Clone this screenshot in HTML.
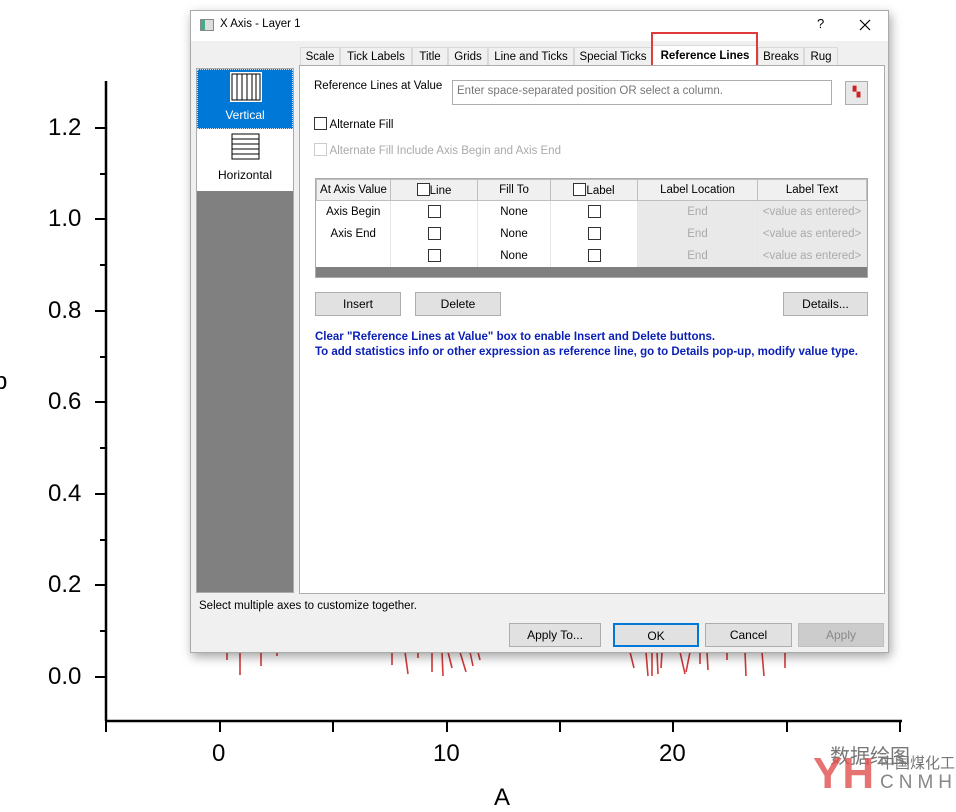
<!DOCTYPE html>
<html><head><meta charset="utf-8"><style>
*{box-sizing:border-box;margin:0;padding:0}
body{width:956px;height:798px;overflow:hidden;background:#fff;position:relative;font-family:"Liberation Sans","DejaVu Sans",sans-serif;font-size:12px;color:#000}
.a{position:absolute}
.ax{font-family:"Liberation Sans",Arial,sans-serif;font-size:24px;color:#000}
.dlg{left:190px;top:10px;width:699px;height:643px;background:#f0f0f0;border:1px solid #aaa;box-shadow:2px 4px 10px rgba(0,0,0,.35)}
.tab{position:absolute;top:36px;height:20px;border:1px solid #d9d9d9;border-bottom:none;background:#f0f0f0;font-size:11.5px;text-align:center;line-height:18px;white-space:nowrap;overflow:hidden}
.btn{position:absolute;height:24px;border:1px solid #adadad;background:#e1e1e1;text-align:center;line-height:22px;font-size:12px}
.cb{display:inline-block;width:13px;height:13px;border:1px solid #333;background:#fff;vertical-align:-2px}
table{border-collapse:collapse;font-size:12px}
td{border-right:1px solid #e6e6e6;text-align:center;height:22px;padding:0;white-space:nowrap}
.hd td{background:#f0f0f0;border:1px solid #bfbfbf;height:21px}
.g{background:#e9e9e9;color:#aaa}
</style></head><body>
<svg class="a" style="left:0;top:0" width="956" height="798">
<g stroke="#000" stroke-width="2.5" fill="none">
<line x1="106" y1="81" x2="106" y2="721"/>
<line x1="105" y1="721" x2="902" y2="721"/>
</g>
<g stroke="#000" stroke-width="2">
<line x1="95" y1="128" x2="106" y2="128"/><line x1="95" y1="219" x2="106" y2="219"/><line x1="95" y1="311" x2="106" y2="311"/><line x1="95" y1="402" x2="106" y2="402"/><line x1="95" y1="494" x2="106" y2="494"/><line x1="95" y1="585" x2="106" y2="585"/><line x1="95" y1="677" x2="106" y2="677"/>
<line x1="100" y1="174" x2="106" y2="174"/><line x1="100" y1="265" x2="106" y2="265"/><line x1="100" y1="357" x2="106" y2="357"/><line x1="100" y1="448" x2="106" y2="448"/><line x1="100" y1="540" x2="106" y2="540"/><line x1="100" y1="631" x2="106" y2="631"/>
<line x1="106" y1="721" x2="106" y2="732"/><line x1="220" y1="721" x2="220" y2="732"/><line x1="333" y1="721" x2="333" y2="732"/><line x1="447" y1="721" x2="447" y2="732"/><line x1="560" y1="721" x2="560" y2="732"/><line x1="673" y1="721" x2="673" y2="732"/><line x1="787" y1="721" x2="787" y2="732"/><line x1="900" y1="721" x2="900" y2="732"/>
</g>
<g stroke="#d03a3a" stroke-width="1.6">
<line x1="227" y1="652" x2="227" y2="660"/><line x1="240" y1="652" x2="240" y2="675"/><line x1="261" y1="652" x2="261" y2="666"/><line x1="277" y1="652" x2="277" y2="656"/>
<line x1="392" y1="652" x2="392" y2="665"/><line x1="405" y1="652" x2="408" y2="674"/><line x1="418" y1="652" x2="418" y2="658"/><line x1="432" y1="652" x2="432" y2="672"/><line x1="442" y1="652" x2="443" y2="676"/><line x1="448" y1="652" x2="452" y2="668"/><line x1="460" y1="652" x2="466" y2="672"/><line x1="470" y1="652" x2="473" y2="666"/><line x1="478" y1="652" x2="480" y2="660"/>
<line x1="630" y1="652" x2="634" y2="668"/><line x1="646" y1="652" x2="648" y2="676"/><line x1="652" y1="652" x2="652" y2="676"/><line x1="657" y1="652" x2="658" y2="674"/><line x1="662" y1="652" x2="661" y2="668"/><line x1="680" y1="652" x2="685" y2="674"/><line x1="690" y1="652" x2="686" y2="672"/><line x1="700" y1="652" x2="700" y2="664"/><line x1="707" y1="652" x2="708" y2="670"/><line x1="727" y1="652" x2="727" y2="660"/><line x1="745" y1="652" x2="746" y2="676"/><line x1="762" y1="652" x2="764" y2="676"/><line x1="785" y1="652" x2="785" y2="668"/>
</g>
</svg>
<div class="a ax" style="left:48px;top:114px">1.2</div>
<div class="a ax" style="left:48px;top:205px">1.0</div>
<div class="a ax" style="left:48px;top:297px">0.8</div>
<div class="a ax" style="left:48px;top:388px">0.6</div>
<div class="a ax" style="left:48px;top:480px">0.4</div>
<div class="a ax" style="left:48px;top:571px">0.2</div>
<div class="a ax" style="left:48px;top:663px">0.0</div>
<div class="a ax" style="left:-6px;top:368px">p</div>
<div class="a ax" style="left:212px;top:740px">0</div>
<div class="a ax" style="left:433px;top:740px">10</div>
<div class="a ax" style="left:659px;top:740px">20</div>
<div class="a ax" style="left:494px;top:784px">A</div>
<div class="a" style="left:830px;top:740px;font-size:20px;color:#777;font-family:'Noto Sans CJK SC',sans-serif">数据绘图</div>
<div class="a" style="left:813px;top:750px;width:60px;height:48px;color:#e05050;font-size:44px;font-weight:bold;line-height:48px;font-family:'Liberation Sans',sans-serif;opacity:.8">YH</div>
<div class="a" style="left:880px;top:752px;font-size:15px;color:#777;font-family:'Noto Sans CJK SC',sans-serif">中国煤化工</div>
<div class="a" style="left:880px;top:772px;font-size:19px;color:#888;letter-spacing:5px;font-family:'Liberation Sans',sans-serif">CNMHG</div>

<div class="a dlg">
 <div class="a" style="left:0;top:0;width:697px;height:30px;background:#fff"></div>
 <div class="a" style="left:9px;top:8px;width:14px;height:12px;border:1px solid #888;background:linear-gradient(90deg,#4a8 0 4px,#ddd 4px)"></div>
 <div class="a" style="left:29px;top:7px;font-size:11.5px">X Axis - Layer 1</div>
 <div class="a" style="left:626px;top:5px;font-size:13px">?</div>
 <svg class="a" style="left:668px;top:8px" width="12" height="12"><path d="M1 1L11 11M11 1L1 11" stroke="#000" stroke-width="1.2"/></svg>

 <div class="tab" style="left:109px;width:40px">Scale</div>
 <div class="tab" style="left:149px;width:72px">Tick Labels</div>
 <div class="tab" style="left:221px;width:36px">Title</div>
 <div class="tab" style="left:257px;width:40px">Grids</div>
 <div class="tab" style="left:297px;width:86px">Line and Ticks</div>
 <div class="tab" style="left:383px;width:78px">Special Ticks</div>
 <div class="tab" style="left:461px;width:106px;background:#fff;font-weight:bold;height:22px;top:34px;line-height:20px">Reference Lines</div>
 <div class="tab" style="left:567px;width:46px">Breaks</div>
 <div class="tab" style="left:613px;width:34px">Rug</div>
 <div class="a" style="left:460px;top:21px;width:107px;height:38px;border:2px solid #e03a3a"></div>

 <div class="a" style="left:5px;top:57px;width:98px;height:525px;background:#808080;border:1px solid #aaa"></div>
 <div class="a" style="left:6px;top:58px;width:96px;height:60px;background:#0078d7;border:1px dotted #cde"></div>
 <div class="a" style="left:6px;top:118px;width:96px;height:62px;background:#fff"></div>
 <svg class="a" style="left:38px;top:60px" width="34" height="32"><rect x="1" y="1" width="32" height="30" fill="#fff"/><rect x="3" y="3" width="28" height="26" fill="#fff" stroke="#000"/><g stroke="#000"><line x1="8" y1="3" x2="8" y2="29"/><line x1="13" y1="3" x2="13" y2="29"/><line x1="18" y1="3" x2="18" y2="29"/><line x1="23" y1="3" x2="23" y2="29"/><line x1="27" y1="3" x2="27" y2="29"/></g></svg>
 <div class="a" style="left:6px;top:97px;width:96px;text-align:center;color:#fff">Vertical</div>
 <svg class="a" style="left:40px;top:122px" width="30" height="28"><rect x="1" y="1" width="27" height="25" fill="#fff" stroke="#000"/><g stroke="#000"><line x1="1" y1="6" x2="28" y2="6"/><line x1="1" y1="11" x2="28" y2="11"/><line x1="1" y1="16" x2="28" y2="16"/><line x1="1" y1="21" x2="28" y2="21"/></g></svg>
 <div class="a" style="left:6px;top:157px;width:96px;text-align:center">Horizontal</div>

 <div class="a" style="left:108px;top:54px;width:586px;height:529px;background:#fff;border:1px solid #adadad"></div>
 <div class="a" style="left:123px;top:69px;font-size:11.5px">Reference Lines at Value</div>
 <div class="a" style="left:261px;top:69px;width:380px;height:25px;border:1px solid #adadad;background:#fff;color:#777;padding:4px 4px;font-size:11.5px">Enter space-separated position OR select a column.</div>
 <div class="a" style="left:654px;top:70px;width:23px;height:24px;border:1px solid #adadad;background:#e8e8e8;color:#c22;font-size:10px;text-align:center;line-height:22px">▚</div>
 <div class="a" style="left:123px;top:106px;font-size:11.5px"><span class="cb"></span> Alternate Fill</div>
 <div class="a" style="left:123px;top:132px;color:#aaa;font-size:11.5px"><span class="cb" style="border-color:#ccc"></span> Alternate Fill Include Axis Begin and Axis End</div>

 <div class="a" style="left:124px;top:167px;width:553px;height:100px;background:#808080;border:1px solid #aaa">
 <table style="width:551px;background:#fff;font-size:11.5px">
  <colgroup><col style="width:74px"><col style="width:87px"><col style="width:73px"><col style="width:87px"><col style="width:120px"><col></colgroup>
  <tr class="hd"><td>At Axis Value</td><td><span class="cb"></span>Line</td><td>Fill To</td><td><span class="cb"></span>Label</td><td>Label Location</td><td>Label Text</td></tr>
  <tr><td>Axis Begin</td><td><span class="cb"></span></td><td>None</td><td><span class="cb"></span></td><td class="g">End</td><td class="g">&lt;value as entered&gt;</td></tr>
  <tr><td>Axis End</td><td><span class="cb"></span></td><td>None</td><td><span class="cb"></span></td><td class="g">End</td><td class="g">&lt;value as entered&gt;</td></tr>
  <tr><td></td><td><span class="cb"></span></td><td>None</td><td><span class="cb"></span></td><td class="g">End</td><td class="g">&lt;value as entered&gt;</td></tr>
 </table></div>

 <div class="btn" style="left:124px;top:281px;width:86px">Insert</div>
 <div class="btn" style="left:224px;top:281px;width:86px">Delete</div>
 <div class="btn" style="left:592px;top:281px;width:85px">Details...</div>
 <div class="a" style="left:124px;top:319px;color:#0a1fb5;font-weight:bold;font-size:11.5px;line-height:15px">Clear "Reference Lines at Value" box to enable Insert and Delete buttons.<br>To add statistics info or other expression as reference line, go to Details pop-up, modify value type.</div>

 <div class="a" style="left:8px;top:589px;font-size:11.5px">Select multiple axes to customize together.</div>
 <div class="btn" style="left:318px;top:612px;width:92px">Apply To...</div>
 <div class="btn" style="left:422px;top:612px;width:86px;border:2px solid #0078d7">OK</div>
 <div class="btn" style="left:514px;top:612px;width:87px">Cancel</div>
 <div class="btn" style="left:607px;top:612px;width:86px;background:#ccc;color:#888;border-color:#bfbfbf">Apply</div>
</div>
</body></html>
